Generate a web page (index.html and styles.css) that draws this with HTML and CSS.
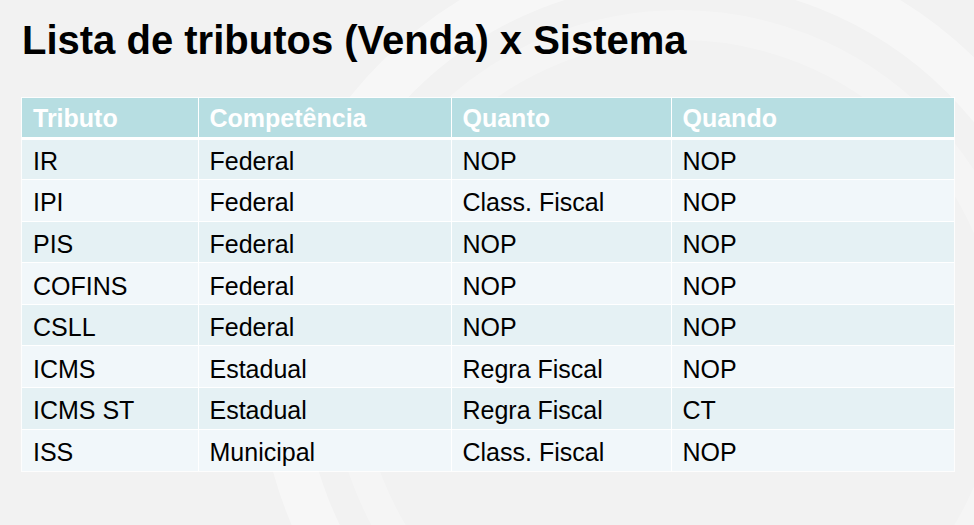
FILE: index.html
```html
<!DOCTYPE html>
<html lang="pt">
<head>
<meta charset="utf-8">
<title>Lista de tributos (Venda) x Sistema</title>
<link rel="stylesheet" href="styles.css">
</head>
<body>
<div class="slide">
  <svg class="watermark" width="974" height="525" viewBox="0 0 974 525" aria-hidden="true">
    <circle cx="680" cy="360" r="400" fill="none" stroke="#ffffff" stroke-opacity="0.4" stroke-width="44"/>
    <circle cx="680" cy="360" r="335" fill="none" stroke="#ffffff" stroke-opacity="0.25" stroke-width="30"/>
  </svg>
  <div class="content">
    <h1 class="title">Lista de tributos (Venda) x Sistema</h1>
    <table class="grid">
      <colgroup>
        <col class="c1"><col class="c2"><col class="c3"><col class="c4">
      </colgroup>
      <thead>
        <tr><th>Tributo</th><th>Competência</th><th>Quanto</th><th>Quando</th></tr>
      </thead>
      <tbody>
        <tr><td>IR</td><td>Federal</td><td>NOP</td><td>NOP</td></tr>
        <tr><td>IPI</td><td>Federal</td><td>Class. Fiscal</td><td>NOP</td></tr>
        <tr><td>PIS</td><td>Federal</td><td>NOP</td><td>NOP</td></tr>
        <tr><td>COFINS</td><td>Federal</td><td>NOP</td><td>NOP</td></tr>
        <tr><td>CSLL</td><td>Federal</td><td>NOP</td><td>NOP</td></tr>
        <tr><td>ICMS</td><td>Estadual</td><td>Regra Fiscal</td><td>NOP</td></tr>
        <tr><td>ICMS ST</td><td>Estadual</td><td>Regra Fiscal</td><td>CT</td></tr>
        <tr><td>ISS</td><td>Municipal</td><td>Class. Fiscal</td><td>NOP</td></tr>
      </tbody>
    </table>
  </div>
</div>
</body>
</html>
```

FILE: styles.css
```css
html, body {
  margin: 0;
  padding: 0;
}

body {
  background: #f2f2f2;
  font-family: "Liberation Sans", Arial, sans-serif;
  color: #000;
}

.slide {
  position: relative;
  width: 974px;
  height: 525px;
  overflow: hidden;
  background: #f2f2f2;
}

.watermark {
  position: absolute;
  left: 0;
  top: 0;
  z-index: 0;
}

.content {
  position: relative;
  z-index: 1;
  padding: 17px 20px 0 22px;
  display: flex;
  flex-direction: column;
}

.title {
  margin: 0;
  font-size: 40px;
  line-height: 46px;
  font-weight: bold;
  letter-spacing: 0;
}

.grid {
  margin-top: 35px;
  width: 932px;
  border-collapse: collapse;
  table-layout: fixed;
  font-size: 25px;
  outline: 1px solid rgba(255, 255, 255, 0.8);
}

.c1 { width: 176px; }
.c2 { width: 253px; }
.c3 { width: 220px; }
.c4 { width: 283px; }

.grid th,
.grid td {
  text-align: left;
  padding: 0 0 0 11px;
  white-space: nowrap;
  border-left: 1px solid #ffffff;
  box-sizing: border-box;
}

.grid th:first-child,
.grid td:first-child {
  border-left: none;
}

.grid th {
  background: #b7dee2;
  color: #ffffff;
  font-weight: bold;
  height: 40px;
  border-bottom: 3px solid #ffffff;
  padding-top: 2px;
  line-height: 30px;
}

.grid td {
  height: 41.6px;
  padding-top: 5px;
  line-height: 29px;
  border-top: 1px solid #ffffff;
}

.grid tbody tr:first-child td {
  border-top: none;
}

.grid tbody tr:nth-child(odd) td {
  background: #e5f1f4;
}

.grid tbody tr:nth-child(even) td {
  background: #f1f7fa;
}
```
